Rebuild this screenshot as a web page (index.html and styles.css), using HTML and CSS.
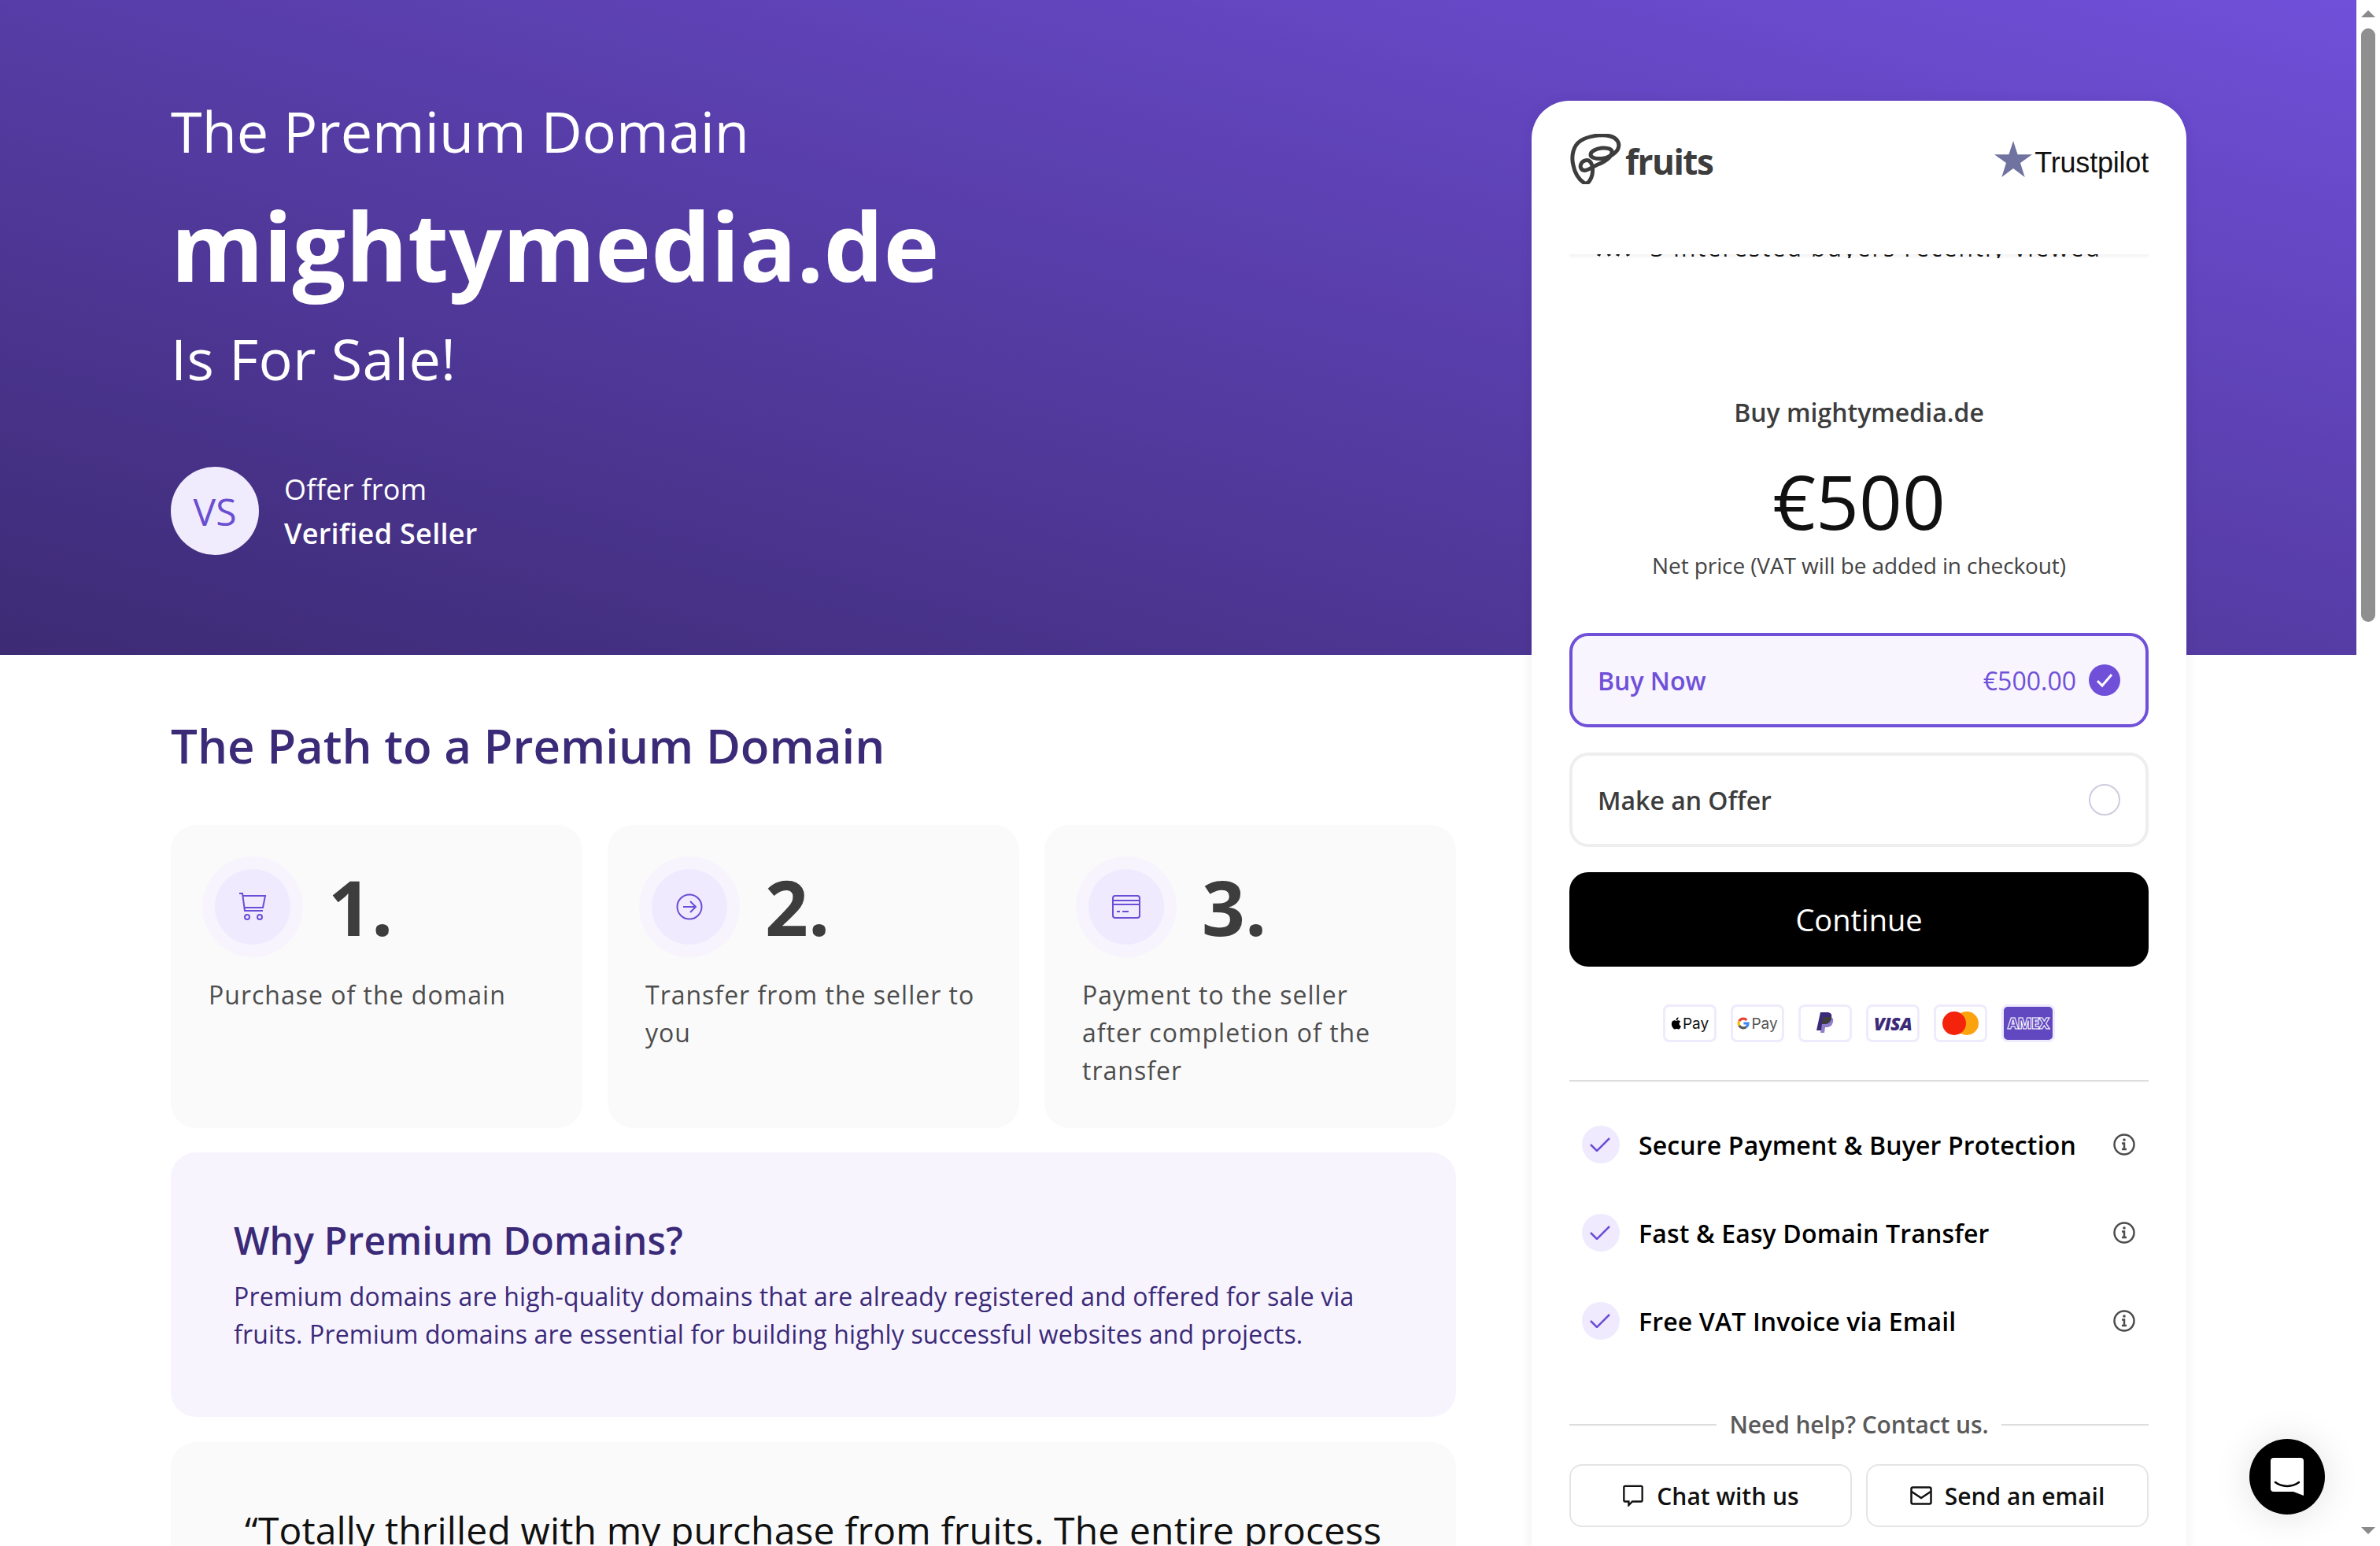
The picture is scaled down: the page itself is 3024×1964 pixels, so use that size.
FILE: index.html
```html
<!DOCTYPE html>
<html lang="en">
<head>
    <meta charset="UTF-8">
    <meta name="viewport" content="width=device-width, initial-scale=1.0">
    <title>mightymedia.de is for sale</title>
    <link rel="stylesheet" href="styles.css">
</head>
<body>

<div class="page">
    <div class="layout">

        <!-- Left column: hero text and the content below it -->
        <main class="main">
            <header class="hero">
                <p class="hero-line">The Premium Domain</p>
                <h1 class="hero-domain">mightymedia.de</h1>
                <p class="hero-line hero-sale">Is For Sale!</p>
                <div class="seller">
                    <div class="seller-avatar">VS</div>
                    <div class="seller-text">
                        <span>Offer from</span>
                        <strong>Verified Seller</strong>
                    </div>
                </div>
            </header>

            <h2 class="path-title">The Path to a Premium Domain</h2>

            <div class="steps">
                <div class="step">
                    <div class="step-head">
                        <div class="step-icon">
                            <svg viewBox="0 0 36 36" class="step-svg"><path d="M1 1h4l3 22h23M6 4h28l-3 15H8"/><circle cx="11" cy="31" r="3"/><circle cx="27" cy="31" r="3"/></svg>
                        </div>
                        <div class="step-num">1.</div>
                    </div>
                    <p class="step-text">Purchase of the domain</p>
                </div>
                <div class="step">
                    <div class="step-head">
                        <div class="step-icon">
                            <svg viewBox="0 0 36 36" class="step-svg"><circle cx="18" cy="18" r="15.5"/><path d="M10 18h16M19 11l7 7-7 7"/></svg>
                        </div>
                        <div class="step-num">2.</div>
                    </div>
                    <p class="step-text">Transfer from the seller to you</p>
                </div>
                <div class="step">
                    <div class="step-head">
                        <div class="step-icon">
                            <svg viewBox="0 0 36 36" class="step-svg"><rect x="1" y="4" width="34" height="28" rx="3"/><path d="M1 10h34M1 15h34M6 24h4M13 24h8"/></svg>
                        </div>
                        <div class="step-num">3.</div>
                    </div>
                    <p class="step-text">Payment to the seller<br>after completion of the transfer</p>
                </div>
            </div>

            <section class="why">
                <h3 class="why-title">Why Premium Domains?</h3>
                <p class="why-text">Premium domains are high-quality domains that are already registered and offered for sale via fruits. Premium domains are essential for building highly successful websites and projects.</p>
            </section>

            <section class="quote">
                <p class="quote-text">“Totally thrilled with my purchase from fruits. The entire process</p>
            </section>
        </main>

        <!-- Right column: checkout panel -->
        <aside class="panel">
            <div class="panel-head">
                <div class="brand">
                    <svg class="brand-mark" viewBox="0 0 66 64"><path d="M19 62.500C12 58 7 50 5 40 2 28 5 15 14 9 23 3 40 0 52 3 60 5 64 11 62.500 17 61 24 50 31 41 31.500 33 32 27 30 27 26.500 27 22 35 18.500 42 18 50 17.500 55 20 54 24 53 30 44 36 34 40 28 43 23 47 19 46.500 15 46 13 42 15 38 17 34 23 32 26 35 30 39 30 47 29 52 28 57 24 65 19 62.500Z"/></svg>
                    <span class="brand-name">fruits</span>
                </div>
                <div class="trustpilot">
                    <svg class="tp-star" viewBox="0 0 48 46"><path d="M24 0l5.600 17.300H48L33 28l5.700 18L24 35 9.300 46 15 28 0 17.300h18.400z"/></svg>
                    <span class="tp-word">Trustpilot</span>
                </div>
            </div>

            <div class="ticker">
                <div class="ticker-row">
                    <svg class="ticker-icon" viewBox="0 0 42 20"><path d="M2 20L9 4l7 16M26 20l7-16 7 16"/></svg>
                    <span class="ticker-text">3 interested buyers recently viewed</span>
                </div>
            </div>

            <div class="price-box">
                <p class="buy-label">Buy mightymedia.de</p>
                <p class="price">€500</p>
                <p class="price-note">Net price (VAT will be added in checkout)</p>
            </div>

            <div class="option option-active">
                <span class="option-name">Buy Now</span>
                <span class="option-price">€500.00</span>
                <span class="radio radio-on"><svg viewBox="0 0 40 40"><path d="M11 21l6 6 12-14"/></svg></span>
            </div>
            <div class="option">
                <span class="option-name">Make an Offer</span>
                <span class="radio"></span>
            </div>
            <button class="continue">Continue</button>

            <div class="pay-row">
                <div class="pay"><svg class="apple" viewBox="0 0 16 19"><path d="M13 10c0-2.200 1.800-3.200 1.900-3.300-1-1.500-2.600-1.700-3.200-1.700-1.300-.1-2.600.8-3.300.8S6.700 5 5.500 5C4 5 2.600 5.900 1.800 7.200.2 10 1.400 14.100 3 16.400c.8 1.100 1.700 2.400 2.900 2.300 1.200 0 1.600-.7 3-.7s1.800.7 3 .7c1.300 0 2-1.100 2.800-2.200.9-1.300 1.200-2.500 1.300-2.600-.1 0-3-1.100-3-3.900zM10.800 3.300c.6-.8 1.100-1.900 1-3-1 0-2.100.6-2.800 1.400-.6.700-1.100 1.800-1 2.900 1.100.1 2.200-.5 2.800-1.300z"/></svg><span class="pay-word">Pay</span></div>
                <div class="pay"><svg class="gicon" viewBox="0 0 20 20"><path class="g-r" d="M3.500 6.500A7.500 7.500 0 0 1 15.500 5"/><path class="g-y" d="M3.500 6.500a7.500 7.500 0 0 0 0 7"/><path class="g-g" d="M3.500 13.500A7.500 7.500 0 0 0 14.500 16"/><path class="g-b" d="M10.500 10H17.500a7.500 7.500 0 0 1-3 6"/></svg><span class="pay-word pay-gray">Pay</span></div>
                <div class="pay"><svg class="paypal" viewBox="0 0 22 28"><path class="pp-light" d="M8 6h8c4 0 6 2 5 6-1 5-4 7-8 7h-2l-1 7H5z"/><path class="pp-dark" d="M5 0h8c5 0 7 2 6 7-1 5-4 8-9 8H7l-1 8H0z"/><path class="pp-mid" d="M7 15h3c4 0 7-2 8.500-6l.5-2c-1-1-2-1-3-1H8z"/></svg></div>
                <div class="pay"><span class="visa">VISA</span></div>
                <div class="pay"><svg class="mc" viewBox="0 0 46 30"><circle cx="31" cy="15" r="15" fill="#fba30f"/><circle cx="15" cy="15" r="15" fill="#f4230b"/></svg></div>
                <div class="pay pay-amex"><span class="amex">AMEX</span></div>
            </div>

            <div class="features">
                <div class="feature">
                    <span class="feature-check"><svg viewBox="0 0 26 18"><path d="M1 9l8 8L25 1"/></svg></span>
                    <span class="feature-text">Secure Payment &amp; Buyer Protection</span>
                    <svg class="info" viewBox="0 0 28 28"><circle cx="14" cy="14" r="12.500"/><path d="M11 12.500h3v7M11 20h6"/><circle class="info-dot" cx="14" cy="8" r="1.800"/></svg>
                </div>
                <div class="feature">
                    <span class="feature-check"><svg viewBox="0 0 26 18"><path d="M1 9l8 8L25 1"/></svg></span>
                    <span class="feature-text">Fast &amp; Easy Domain Transfer</span>
                    <svg class="info" viewBox="0 0 28 28"><circle cx="14" cy="14" r="12.500"/><path d="M11 12.500h3v7M11 20h6"/><circle class="info-dot" cx="14" cy="8" r="1.800"/></svg>
                </div>
                <div class="feature">
                    <span class="feature-check"><svg viewBox="0 0 26 18"><path d="M1 9l8 8L25 1"/></svg></span>
                    <span class="feature-text">Free VAT Invoice via Email</span>
                    <svg class="info" viewBox="0 0 28 28"><circle cx="14" cy="14" r="12.500"/><path d="M11 12.500h3v7M11 20h6"/><circle class="info-dot" cx="14" cy="8" r="1.800"/></svg>
                </div>
            </div>

            <div class="help-line"><span>Need help? Contact us.</span></div>

            <div class="contact">
                <button class="contact-btn">
                    <svg viewBox="0 0 28 30"><path d="M3 2h22a1.500 1.500 0 0 1 1.500 1.500v18a1.500 1.500 0 0 1-1.500 1.500H13l-5 5v-5H3a1.500 1.500 0 0 1-1.500-1.500v-18A1.500 1.500 0 0 1 3 2z"/></svg>
                    Chat with us
                </button>
                <button class="contact-btn">
                    <svg viewBox="0 0 28 24"><rect x="1.500" y="1.500" width="25" height="21" rx="2"/><path d="M2 7l12 8 12-8"/></svg>
                    Send an email
                </button>
            </div>
        </aside>
    </div>

    <!-- Chat launcher -->
    <div class="launcher">
        <svg viewBox="0 0 42 48"><path d="M4 0h34a4 4 0 0 1 4 4v44l-13-5H4a4 4 0 0 1-4-4V4a4 4 0 0 1 4-4z" fill="#fff"/><path class="smile" d="M6 31c8 6.500 22 6.500 30 0"/></svg>
    </div>
</div>

<!-- Browser scrollbar as it shows in the screenshot -->
<div class="scrollbar">
    <span class="arrow-up"></span>
    <div class="thumb"></div>
    <span class="arrow-down"></span>
</div>

</body>
</html>
```

FILE: styles.css
```css
html, body {
    margin: 0;
    padding: 0;
    height: 1964px;
    overflow: hidden;
    background: #fff;
    font-family: "Open Sans", "Noto Sans", sans-serif;
}

body {
    display: flex;
}

p, h1, h2, h3 {
    margin: 0;
}

/* Page and its two columns */
.page {
    position: relative;
    width: 2994px;
    height: 1964px;
    overflow: hidden;
    flex: none;
}

.page::before {
    content: "";
    position: absolute;
    top: 0;
    left: 0;
    right: 0;
    height: 832px;
    background: linear-gradient(195deg, #7050d9 0%, #5f43b8 32%, #3d2b74 100%);
}

.layout {
    position: relative;
    display: flex;
    gap: 96px;
    padding-left: 217px;
}

.main {
    width: 1633px;
    flex: none;
}

/* Hero */
.hero {
    height: 832px;
    color: #fff;
    padding-top: 117px;
    box-sizing: border-box;
}

.hero-line {
    font-size: 72px;
    line-height: 98px;
}

.hero-domain {
    font-size: 120px;
    line-height: 165px;
    font-weight: 700;
    margin-top: 14px;
}

.hero-sale {
    margin-top: 12px;
    letter-spacing: .3px;
}

.seller {
    display: flex;
    align-items: center;
    gap: 32px;
    margin-top: 88px;
}

.seller-avatar {
    width: 112px;
    height: 112px;
    border-radius: 50%;
    background: #f1ebfe;
    color: #6a4ed0;
    font-size: 48px;
    display: flex;
    align-items: center;
    justify-content: center;
}

.seller-text {
    display: flex;
    flex-direction: column;
    font-size: 36px;
    line-height: 56px;
    letter-spacing: .3px;
    margin-top: 2px;
}

.seller-text strong {
    font-weight: 600;
}

/* Path section */
.path-title {
    font-size: 60px;
    line-height: 82px;
    font-weight: 600;
    color: #3b2a78;
    margin-top: 74px;
}

.steps {
    display: grid;
    grid-template-columns: repeat(3, 1fr);
    gap: 32px;
    margin-top: 60px;
}

.step {
    height: 385px;
    box-sizing: border-box;
    background: #fafafa;
    border-radius: 32px;
    padding: 40px 48px 0;
}

.step-head {
    display: flex;
    align-items: center;
    gap: 48px;
}

.step-icon {
    width: 96px;
    height: 96px;
    border-radius: 50%;
    background: #f0eafe;
    box-shadow: 0 0 0 16px #f7f4fe;
    display: flex;
    align-items: center;
    justify-content: center;
    margin: 16px 16px 16px 8px;
}

.step-svg {
    width: 36px;
    height: 36px;
    fill: none;
    stroke: #6a4ed6;
    stroke-width: 2;
}

.step-num {
    font-size: 96px;
    line-height: 128px;
    font-weight: 700;
    color: #3d3d3d;
    margin-left: -16px;
}

.step-text {
    font-size: 32px;
    line-height: 48px;
    color: #4d4d4d;
    letter-spacing: 1px;
    margin-top: 24px;
}

/* Why box */
.why {
    background: #f7f4fe;
    border-radius: 32px;
    height: 336px;
    box-sizing: border-box;
    margin-top: 31px;
    padding: 76px 80px 0;
    color: #3b2a78;
}

.why-title {
    font-size: 48px;
    line-height: 72px;
    font-weight: 600;
    letter-spacing: .2px;
}

.why-text {
    font-size: 32px;
    line-height: 48px;
    letter-spacing: .15px;
    margin-top: 11px;
}

/* Testimonial */
.quote {
    background: #fafafa;
    border-radius: 32px;
    height: 400px;
    margin-top: 32px;
    padding: 76px 94px 0;
}

.quote-text {
    font-size: 48px;
    line-height: 72px;
    color: #111;
    letter-spacing: .15px;
    white-space: nowrap;
}

/* Checkout panel */
.panel {
    width: 832px;
    flex: none;
    box-sizing: border-box;
    margin-top: 128px;
    height: 1900px;
    padding: 0 48px;
    background: #fff;
    border-radius: 48px;
    box-shadow: 0 0 16px rgba(40, 20, 90, .08);
}

.panel-head {
    display: flex;
    justify-content: space-between;
    align-items: center;
    height: 195px;
    padding-bottom: 48px;
    box-sizing: border-box;
}

.brand {
    display: flex;
    align-items: center;
    gap: 5px;
}

.brand-mark {
    width: 66px;
    height: 64px;
    fill: none;
    stroke: #3d3d3d;
    stroke-width: 5;
}

.brand-name {
    font-size: 44px;
    line-height: 64px;
    font-weight: 700;
    letter-spacing: -1.500px;
    color: #3d3d3d;
    margin-top: 6px;
}

.trustpilot {
    display: flex;
    align-items: center;
    font-family: "Liberation Sans", Arial, sans-serif;
    font-size: 36px;
    color: #111;
    letter-spacing: -.2px;
}

.tp-star {
    width: 48px;
    height: 46px;
    fill: #70729f;
    margin-right: 3px;
}

.tp-word {
    margin-top: 10px;
}

.ticker {
    height: 5px;
    overflow: hidden;
    background: linear-gradient(#f4f4f4, #fbfbfb);
}

.ticker-row {
    display: flex;
    justify-content: center;
    align-items: center;
    gap: 26px;
    height: 40px;
    padding-right: 25px;
    margin-top: -28px;
}

.ticker-icon {
    width: 42px;
    height: 40px;
    fill: none;
    stroke: #111;
    stroke-width: 4;
}

.ticker-text {
    font-size: 30px;
    line-height: 40px;
    color: #111;
    letter-spacing: 2.200px;
    white-space: nowrap;
}

.price-box {
    text-align: center;
    margin-top: 172px;
}

.buy-label {
    font-size: 32px;
    line-height: 48px;
    font-weight: 600;
    color: #3d3d3d;
}

.price {
    font-size: 96px;
    line-height: 130px;
    color: #111;
    margin-top: 23px;
}

.price-note {
    font-size: 28px;
    line-height: 40px;
    letter-spacing: -.1px;
    color: #444;
    margin-top: -3px;
}

.option {
    height: 120px;
    box-sizing: border-box;
    border: 4px solid #eee;
    border-radius: 24px;
    padding: 0 32px;
    display: flex;
    align-items: center;
    gap: 16px;
    margin-bottom: 32px;
    font-size: 32px;
}

.option-active {
    border-color: #7050d8;
    background: #f8f5ff;
    color: #7050d8;
    margin-top: 66px;
}

.option-name {
    flex: 1;
    font-weight: 600;
    color: #3d3d3d;
}

.option-active .option-name {
    color: #7050d8;
}

.option-price {
    font-size: 32px;
}

.radio {
    width: 40px;
    height: 40px;
    box-sizing: border-box;
    border: 2px solid #cfccdf;
    border-radius: 50%;
}

.radio-on {
    background: #7050d8;
    border: 0;
}

.radio-on svg {
    display: block;
    fill: none;
    stroke: #fff;
    stroke-width: 3;
}

.continue {
    display: block;
    width: 100%;
    height: 120px;
    border: 0;
    border-radius: 24px;
    background: #000;
    color: #fff;
    font-family: inherit;
    font-size: 38px;
    font-weight: 500;
}

.pay-row {
    display: flex;
    justify-content: center;
    gap: 18px;
    margin-top: 48px;
    padding-bottom: 48px;
    border-bottom: 2px solid #ddd;
}

.pay {
    width: 68px;
    height: 48px;
    box-sizing: border-box;
    border: 3px solid #f0eafd;
    border-radius: 8px;
    display: flex;
    align-items: center;
    justify-content: center;
    gap: 2px;
}

.apple {
    width: 13px;
    height: 16px;
    fill: #000;
}

.pay-word {
    font-family: Inter, "Open Sans", sans-serif;
    font-size: 19px;
    color: #111;
}

.pay-gray {
    color: #555;
}

.gicon {
    width: 16px;
    height: 16px;
    fill: none;
    stroke-width: 4;
}

.g-r { stroke: #ea4335; }
.g-y { stroke: #fbbc04; }
.g-g { stroke: #555; }
.g-b { stroke: #4285f4; }

.paypal {
    width: 22px;
    height: 28px;
}

.pp-light { fill: #8f7ecb; }
.pp-dark { fill: #3b2a78; }
.pp-mid { fill: #3d3d3d; }

.visa {
    font-size: 23px;
    font-weight: 800;
    font-style: italic;
    letter-spacing: -.5px;
    color: #3b2a78;
}

.mc {
    width: 46px;
    height: 30px;
}

.pay-amex {
    background: #6148c0;
}

.amex {
    font-size: 19px;
    font-weight: 800;
    letter-spacing: -1px;
    color: #6148c0;
    -webkit-text-stroke: 1px #fff;
}

.features {
    display: flex;
    flex-direction: column;
    gap: 64px;
    margin-top: 56px;
}

.feature {
    display: flex;
    align-items: center;
    height: 48px;
    padding-left: 16px;
    font-size: 32px;
    font-weight: 600;
    color: #000;
}

.feature-check {
    width: 48px;
    height: 48px;
    border-radius: 50%;
    background: #f0eafe;
    display: flex;
    align-items: center;
    justify-content: center;
    margin-right: 24px;
    flex: none;
}

.feature-check svg {
    width: 26px;
    height: 18px;
    fill: none;
    stroke: #6a4ed6;
    stroke-width: 2.500;
    margin-left: -2px;
}

.feature-text {
    flex: 1;
    letter-spacing: .15px;
}

.info {
    width: 28px;
    height: 28px;
    margin-right: 17px;
    fill: none;
    stroke: #4d4d4d;
    stroke-width: 2.500;
}

.info-dot {
    fill: #4d4d4d;
    stroke: none;
}

.help-line {
    display: flex;
    align-items: center;
    gap: 16px;
    margin-top: 86px;
    font-size: 30px;
    line-height: 44px;
    font-weight: 600;
    letter-spacing: -.1px;
    color: #5a5a5a;
    white-space: nowrap;
}

.help-line::before, .help-line::after {
    content: "";
    flex: 1;
    height: 2px;
    background: #ddd;
}

.contact {
    display: grid;
    grid-template-columns: 1fr 1fr;
    gap: 18px;
    margin-top: 28px;
}

.contact-btn {
    height: 80px;
    background: #fff;
    border: 2px solid #e5e5e5;
    border-radius: 16px;
    font-family: inherit;
    font-size: 30px;
    font-weight: 600;
    color: #111;
    display: flex;
    align-items: center;
    justify-content: center;
    gap: 16px;
}

.contact-btn svg {
    width: 28px;
    height: 28px;
    fill: none;
    stroke: #111;
    stroke-width: 2.500;
}

/* Chat launcher */
.launcher {
    position: absolute;
    left: 2858px;
    top: 1828px;
    width: 96px;
    height: 96px;
    border-radius: 50%;
    background: #000;
    box-shadow: 0 2px 48px rgba(0, 0, 0, .12);
    display: flex;
    align-items: center;
    justify-content: center;
}

.launcher svg {
    width: 42px;
    height: 48px;
}

.smile {
    fill: none;
    stroke: #000;
    stroke-width: 2.500;
    stroke-linecap: round;
}

/* Scrollbar */
.scrollbar {
    width: 30px;
    height: 1964px;
    flex: none;
    background: #fff;
    position: relative;
}

.thumb {
    position: absolute;
    top: 36px;
    left: 6px;
    width: 18px;
    height: 754px;
    background: #8f8f8f;
    border-radius: 9px;
}

.arrow-up, .arrow-down {
    position: absolute;
    left: 6px;
    width: 0;
    height: 0;
    border-left: 9px solid transparent;
    border-right: 9px solid transparent;
}

.arrow-up {
    top: 13px;
    border-bottom: 9px solid #8a8a8a;
}

.arrow-down {
    top: 1940px;
    border-top: 9px solid #8a8a8a;
}
```
